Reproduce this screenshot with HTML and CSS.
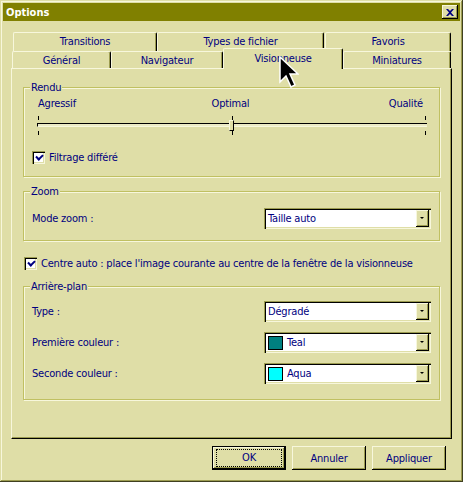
FILE: index.html
```html
<!DOCTYPE html>
<html lang="fr">
<head>
    <meta charset="UTF-8">
    <title>Options</title>
    <link rel="stylesheet" href="styles.css">
</head>
<body>

    <div class="window">
        <div class="titlebar">
            <span class="title">Options</span>
            <div class="close-btn">
                <svg width="8" height="7" viewBox="0 0 8 7"><path d="M0 0h2l2 2 2-2h2L5 3.5 8 7H6L4 5 2 7H0l3-3.5z" fill="#000080"/></svg>
            </div>
        </div>

        <div class="dialog">
            <div class="tabs">
                <div class="tab-row back">
                    <div class="tab w-transitions">Transitions</div>
                    <div class="tab w-types">Types de fichier</div>
                    <div class="tab w-favoris">Favoris</div>
                </div>
                <div class="tab-row front">
                    <div class="tab w-general">Général</div>
                    <div class="tab w-nav">Navigateur</div>
                    <div class="tab w-vision active">Visionneuse</div>
                    <div class="tab w-mini">Miniatures</div>
                </div>
            </div>

            <div class="panel">
                <div class="group rendu">
                    <span class="group-title">Rendu</span>
                    <div class="slider">
                        <div class="slider-labels">
                            <span>Agressif</span>
                            <span>Optimal</span>
                            <span class="right">Qualité</span>
                        </div>
                        <div class="ticks"><i></i><i></i><i></i></div>
                        <div class="track"></div>
                        <div class="ticks bottom"><i></i><i></i><i></i></div>
                        <div class="thumb"></div>
                    </div>
                    <label class="check">
                        <span class="box checked"></span>
                        Filtrage différé
                    </label>
                </div>

                <div class="group zoom">
                    <span class="group-title">Zoom</span>
                    <div class="field">
                        <span>Mode zoom :</span>
                        <div class="combo"><span class="value">Taille auto</span><span class="drop"></span></div>
                    </div>
                </div>

                <label class="check centre">
                    <span class="box checked"></span>
                    Centre auto : place l'image courante au centre de la fenêtre de la visionneuse
                </label>

                <div class="group fond">
                    <span class="group-title">Arrière-plan</span>
                    <div class="field">
                        <span>Type :</span>
                        <div class="combo"><span class="value">Dégradé</span><span class="drop"></span></div>
                    </div>
                    <div class="field">
                        <span>Première couleur :</span>
                        <div class="combo"><span class="value"><span class="swatch teal"></span>Teal</span><span class="drop"></span></div>
                    </div>
                    <div class="field">
                        <span>Seconde couleur :</span>
                        <div class="combo"><span class="value"><span class="swatch aqua"></span>Aqua</span><span class="drop"></span></div>
                    </div>
                </div>
            </div>

            <div class="actions">
                <button class="btn default"><span>OK</span></button>
                <button class="btn">Annuler</button>
                <button class="btn">Appliquer</button>
            </div>
        </div>

        <svg class="cursor" width="20" height="33" viewBox="0 0 20 33">
            <path d="M1 1v25l6-6 5 11 4-2-5-11h8z" fill="#000" stroke="#fff" stroke-width="1.5" stroke-linejoin="miter"/>
        </svg>
    </div>

</body>
</html>
```

FILE: styles.css
```css
body {
    margin: 0;
    background: #dfdea7;
    font-family: "DejaVu Sans Condensed", "DejaVu Sans", sans-serif;
    font-size: 11px;
    letter-spacing: -0.2px;
    color: #000080;
}

.window {
    position: relative;
    width: 463px;
    height: 482px;
    box-sizing: border-box;
    padding: 3px;
    background: #dfdea7;
    box-shadow: inset -1px -1px #404020, inset 1px 1px #dfdea7, inset -2px -2px #9c9c50, inset 2px 2px #f7f7dc;
}

.titlebar {
    height: 18px;
    background: #808000;
    display: flex;
    align-items: center;
    justify-content: space-between;
    padding-left: 3px;
}

.title {
    color: #fff;
    font-weight: bold;
    letter-spacing: 0;
}

.close-btn {
    width: 16px;
    height: 14px;
    margin-right: 2px;
    box-sizing: border-box;
    background: #dfdea7;
    display: flex;
    align-items: center;
    justify-content: center;
    box-shadow: inset -1px -1px #000, inset 1px 1px #f7f7dc, inset -2px -2px #9c9c50;
}

.dialog {
    padding: 11px 8px 0 8px;
}

/* tabs */
.tab-row {
    display: flex;
}

.tab-row.back {
    height: 19px;
    padding-left: 2px;
}

.tab-row.front {
    height: 17px;
    padding-left: 1px;
}

.tab {
    box-sizing: border-box;
    height: 100%;
    display: flex;
    align-items: center;
    justify-content: center;
    border-top: 1px solid #f7f7dc;
    border-left: 1px solid #f7f7dc;
    border-right: 1px solid #000;
    border-radius: 2px 2px 0 0;
    box-shadow: inset -1px 0 #9c9c50;
}

.back .tab {
    padding-bottom: 1px;
}

.w-transitions { width: 144px; }
.w-types { width: 167px; margin-right: 1px; }
.w-favoris { width: 126px; }
.w-general { width: 99px; }
.w-nav { width: 112px; }
.w-vision { width: 120px; }
.w-mini { width: 108px; }

.tab.active {
    position: relative;
    z-index: 1;
    height: 21px;
    margin-top: -3px;
    padding-bottom: 2px;
    background: #dfdea7;
}

/* panel */
.panel {
    box-sizing: border-box;
    height: 371px;
    padding: 18px 11px 0 11px;
    border-top: 1px solid #f7f7dc;
    border-left: 1px solid #f7f7dc;
    border-right: 1px solid #000;
    border-bottom: 1px solid #000;
    box-shadow: inset -1px -1px #9c9c50;
}

.group {
    position: relative;
    border: 1px solid #c0c062;
    box-shadow: inset 1px 1px #f7f7dc, 1px 1px #f7f7dc;
}

.group-title {
    position: absolute;
    top: -7px;
    left: 6px;
    padding: 0 1px;
    line-height: 13px;
    background: #dfdea7;
}

.rendu {
    height: 90px;
    box-sizing: border-box;
    padding: 9px 8px 0 8px;
}

.zoom {
    margin-top: 14px;
    height: 50px;
    box-sizing: border-box;
    padding-top: 16px;
}

.fond {
    margin-top: 16px;
    height: 114px;
    box-sizing: border-box;
    padding-top: 14px;
}

/* slider */
.slider {
    position: relative;
    margin: 0 4px 0 5px;
}

.slider-labels {
    display: grid;
    grid-template-columns: 1fr auto 1fr;
    line-height: 13px;
    padding: 0 4px 0 1px;
}

.slider-labels .right {
    justify-self: end;
}

.ticks {
    display: flex;
    justify-content: space-between;
    padding: 0 1px;
    margin-top: 6px;
    height: 4px;
}

.ticks i {
    width: 1px;
    height: 4px;
    background: #000;
}

.ticks.bottom {
    margin-top: 4px;
}

.track {
    margin-top: 3px;
    height: 4px;
    box-sizing: border-box;
    border-top: 1px solid #000;
    border-left: 1px solid #000;
    border-bottom: 1px solid #f7f7dc;
    background: #ecebc5;
}

.thumb {
    position: absolute;
    left: 192px;
    top: 23px;
    width: 5px;
    height: 11px;
    box-sizing: border-box;
    background: #dfdea7;
    border-left: 1px solid #f7f7dc;
    border-top: 1px solid #f7f7dc;
    border-right: 1px solid #000;
    border-bottom: 1px solid #000;
}

/* checkbox */
.check {
    display: flex;
    align-items: center;
    gap: 4px;
    height: 13px;
    line-height: 13px;
}

.rendu .check {
    margin-top: 16px;
}

.check.centre {
    margin-top: 16px;
    padding-left: 1px;
}

.box {
    width: 13px;
    height: 13px;
    box-sizing: border-box;
    background: #fff;
    box-shadow: inset 1px 1px #9c9c50, inset 2px 2px #000, inset -1px -1px #f7f7dc, inset -2px -2px #dfdea7;
    position: relative;
}

.box.checked::after {
    content: "";
    position: absolute;
    left: 3px;
    top: 2px;
    width: 5px;
    height: 3px;
    border-left: 2px solid #000080;
    border-bottom: 2px solid #000080;
    transform: translate(1px, 1px) rotate(-45deg);
    transform-origin: center;
}

/* fields & combos */
.field {
    display: flex;
    align-items: center;
    justify-content: space-between;
    padding: 0 8px;
}

.fond .field + .field {
    margin-top: 10px;
}

.combo {
    width: 167px;
    height: 21px;
    box-sizing: border-box;
    background: #fff;
    display: flex;
    align-items: center;
    justify-content: space-between;
    padding: 2px;
    box-shadow: inset 1px 1px #9c9c50, inset 2px 2px #000, inset -1px -1px #f7f7dc, inset -2px -2px #dfdea7;
}

.combo .value {
    display: flex;
    align-items: center;
    padding-left: 2px;
}

.drop {
    width: 13px;
    height: 17px;
    box-sizing: border-box;
    background: #dfdea7;
    box-shadow: inset -1px -1px #000, inset 1px 1px #f7f7dc, inset -2px -2px #9c9c50;
    position: relative;
}

.drop::after {
    content: "";
    position: absolute;
    left: 4px;
    top: 7px;
    border-left: 2px solid transparent;
    border-right: 2px solid transparent;
    border-top: 2px solid #000;
}

.swatch {
    width: 15px;
    height: 14px;
    box-sizing: border-box;
    border: 1px solid #000;
    margin-right: 4px;
}

.swatch.teal { background: #008080; }
.swatch.aqua { background: #00ffff; }

/* buttons */
.actions {
    display: flex;
    justify-content: flex-end;
    gap: 6px;
    margin-top: 7px;
    padding-right: 6px;
}

.btn {
    width: 74px;
    height: 24px;
    font: inherit;
    letter-spacing: inherit;
    color: #000080;
    background: #dfdea7;
    border: none;
    padding: 0;
    box-shadow: inset -1px -1px #000, inset 1px 1px #f7f7dc, inset -2px -2px #9c9c50;
}

.btn.default {
    box-shadow: inset 0 0 0 1px #000, inset -2px -2px #000, inset 2px 2px #f7f7dc, inset -3px -3px #9c9c50;
    display: flex;
    align-items: center;
    justify-content: center;
}

.btn.default span {
    width: 66px;
    height: 18px;
    box-sizing: border-box;
    line-height: 16px;
    border: 1px dotted #000;
}

.cursor {
    position: absolute;
    z-index: 2;
    left: 279px;
    top: 56px;
}
```
